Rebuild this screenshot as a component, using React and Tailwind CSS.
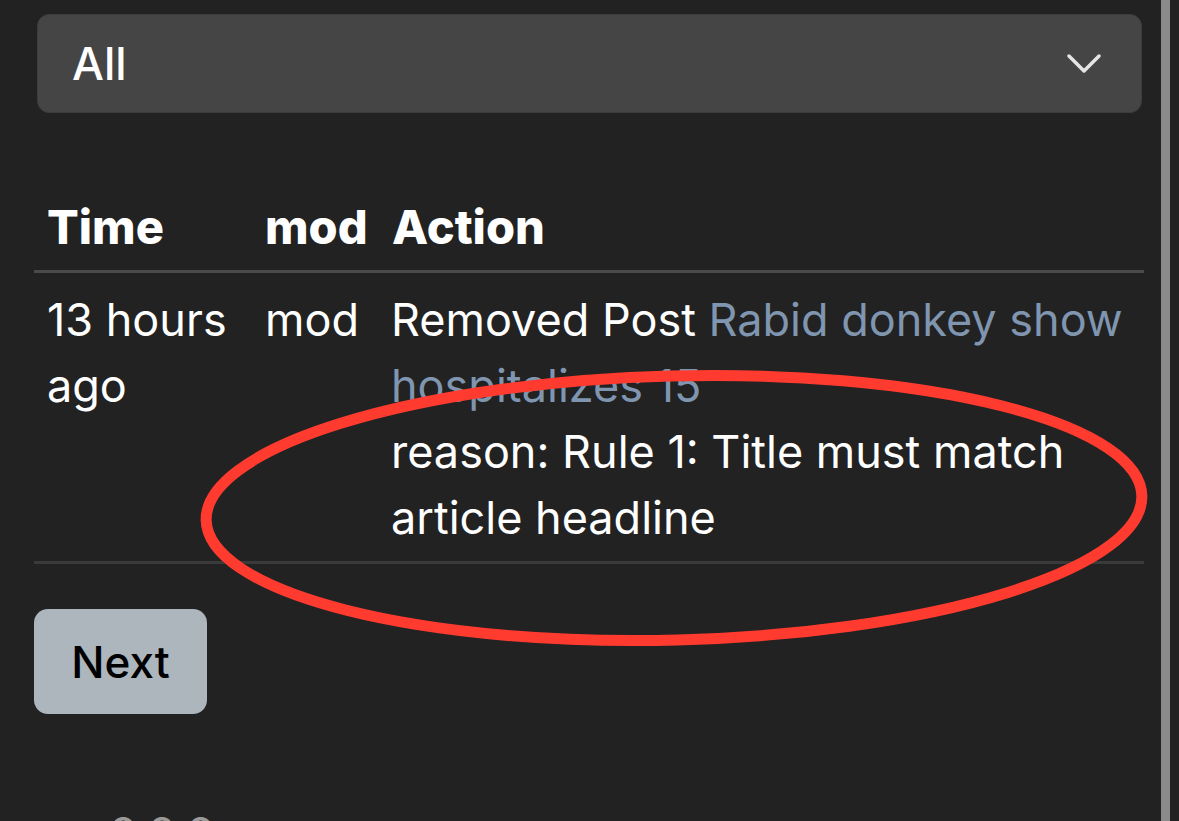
import React from "react";

function Chevron() {
  return (
    <svg width="34" height="20" viewBox="0 0 34 20" fill="none">
      <polyline
        points="2,2 17,17 32,2"
        stroke="#e5e5e5"
        strokeWidth="3.5"
        strokeLinecap="round"
        strokeLinejoin="round"
      />
    </svg>
  );
}

function ModlogTable() {
  return (
    <table className="w-full border-collapse table-fixed text-white">
      <colgroup>
        <col className="w-[218px]" />
        <col className="w-[127px]" />
        <col />
      </colgroup>
      <thead>
        <tr className="border-b-[3px] border-[#4a4a4a]">
          <th className="text-left align-bottom px-[13px] pt-3 pb-[14px] text-[47px] leading-[58px] font-extrabold">
            Time
          </th>
          <th className="text-left align-bottom px-[13px] pt-3 pb-[14px] text-[47px] leading-[58px] font-extrabold">
            mod
          </th>
          <th className="text-left align-bottom px-[13px] pt-3 pb-[14px] text-[47px] leading-[58px] font-extrabold">
            Action
          </th>
        </tr>
      </thead>
      <tbody>
        <tr className="border-b-[3px] border-[#3a3a3a]">
          <td className="align-top px-[13px] pt-[14px] pb-[10px] text-[45px] leading-[66px]">
            13 hours ago
          </td>
          <td className="align-top px-[13px] pt-[14px] pb-[10px] text-[45px] leading-[66px]">
            mod
          </td>
          <td className="align-top pl-[12px] pr-[8px] pt-[14px] pb-[10px] text-[45px] leading-[66px]">
            <div>
              Removed Post{" "}
              <a className="text-[#7f95b0]">Rabid donkey show hospitalizes 15</a>
            </div>
            <div>reason: Rule 1: Title must match article headline</div>
          </td>
        </tr>
      </tbody>
    </table>
  );
}

export default function App() {
  return (
    <div
      className="relative w-[1179px] h-[821px] overflow-hidden bg-[#222222] flex"
      style={{ fontFamily: "Inter, 'Noto Sans', sans-serif" }}
    >
      <div className="flex-1 pl-[34px] pr-[17px] pt-[14px]">
        <div className="ml-[3px] mr-[2px] h-[99px] rounded-[12px] bg-[#454545] border border-[#3c3c3c] flex items-center justify-between pl-[34px] pr-[40px]">
          <span className="text-white text-[45px] font-medium">All</span>
          <Chevron />
        </div>

        <div className="mt-[73px]">
          <ModlogTable />
        </div>

        <button className="mt-[45px] w-[173px] h-[105px] rounded-[14px] bg-[#adb5bd] text-black text-[44px] font-medium">
          Next
        </button>

        <div className="mt-[78px] pl-[76px] text-[44px] text-[#9a9a9a] leading-[66px]">
          o o o
        </div>
      </div>

      <div className="w-[9px] bg-[#8a8a8a]" />
      <div className="w-[9px]" />

      <svg
        className="absolute inset-0 pointer-events-none"
        width="1179"
        height="821"
        viewBox="0 0 1179 821"
      >
        <ellipse
          cx="674"
          cy="508"
          rx="468"
          ry="132"
          fill="none"
          stroke="#ff3b30"
          strokeWidth="11"
          transform="rotate(-1.5 674 508)"
        />
      </svg>
    </div>
  );
}
